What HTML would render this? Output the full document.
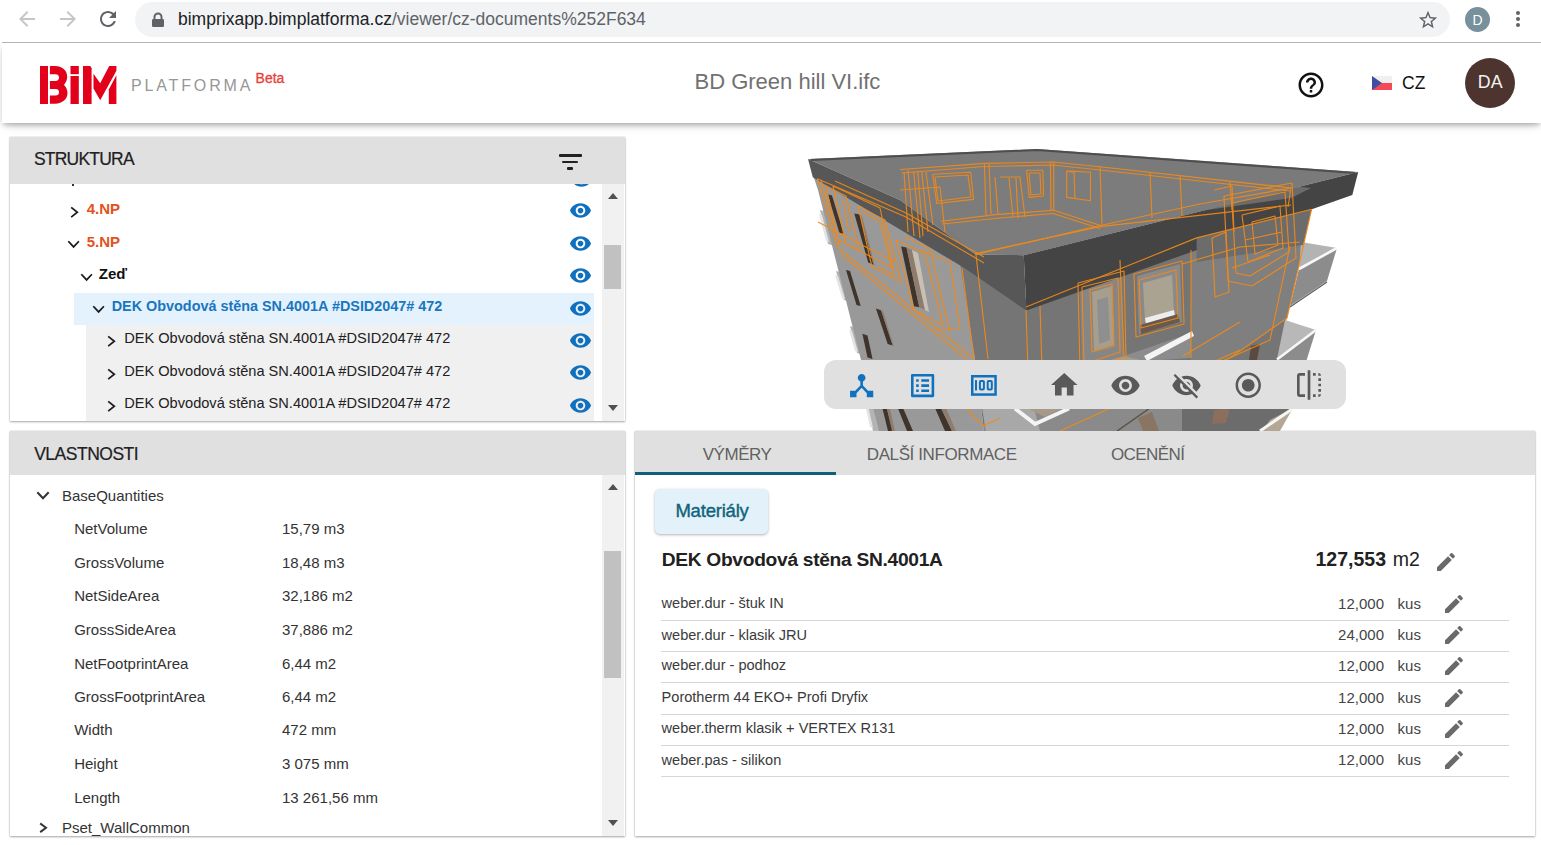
<!DOCTYPE html>
<html><head><meta charset="utf-8">
<style>
*{box-sizing:border-box;margin:0;padding:0}
html,body{width:1541px;height:845px;overflow:hidden;background:#fff;font-family:"Liberation Sans",sans-serif}
body{position:relative}
.t{position:absolute;line-height:1;white-space:nowrap}
.ic{position:absolute;display:block;overflow:visible}
.box{position:absolute}
</style></head><body>
<div class="box" style="left:2px;top:42px;width:1539px;height:1px;background:#b8b8b8"></div>
<div class="box" style="left:135px;top:2px;width:1315px;height:35px;border-radius:17.5px;background:#f1f3f4"></div>
<svg class="ic" style="left:15px;top:7px;width:24px;height:24px;" viewBox="0 0 24 24"><path fill="#c4c7c9" d="M20 11H7.83l5.59-5.59L12 4l-8 8 8 8 1.41-1.41L7.83 13H20v-2z"/></svg>
<svg class="ic" style="left:55.5px;top:7px;width:24px;height:24px;" viewBox="0 0 24 24"><path fill="#c4c7c9" d="M12 4l-1.41 1.41L16.17 11H4v2h12.17l-5.58 5.59L12 20l8-8z"/></svg>
<svg class="ic" style="left:95.5px;top:7.3px;width:24px;height:24px;" viewBox="0 0 24 24"><path fill="#5f6368" d="M17.65 6.35C16.2 4.9 14.21 4 12 4c-4.42 0-7.99 3.58-7.99 8s3.57 8 7.99 8c3.73 0 6.84-2.55 7.73-6h-2.08c-.82 2.33-3.04 4-5.65 4-3.31 0-6-2.69-6-6s2.69-6 6-6c1.66 0 3.14.69 4.22 1.78L13 11h7V4l-2.35 2.35z"/></svg>
<svg class="ic" style="left:150px;top:11px;width:16px;height:18px" viewBox="0 0 16 18"><path d="M4.5 8V6a3.5 3.5 0 0 1 7 0v2" fill="none" stroke="#5f6368" stroke-width="2"/><rect x="2" y="8" width="12" height="8" rx="1.2" fill="#5f6368"/></svg>
<div class="t" style="left:178px;top:11.19px;font-size:17.5px;color:#202124;font-weight:normal;">bimprixapp.bimplatforma.cz<span style="color:#5f6368">/viewer/cz-documents%252F634</span></div>
<svg class="ic" style="left:1416.5px;top:8.5px;width:22px;height:22px;" viewBox="0 0 24 24"><path fill="#5f6368" d="M22 9.24l-7.19-.62L12 2 9.19 8.63 2 9.24l5.46 4.73L5.82 21 12 17.270 18.18 21l-1.63-7.03L22 9.24zM12 15.4l-3.76 2.27 1-4.28-3.32-2.88 4.38-.38L12 6.1l1.71 4.04 4.38.38-3.32 2.88 1 4.28L12 15.4z"/></svg>
<div class="box" style="left:1465px;top:7px;width:25px;height:25px;border-radius:50%;background:#78909c"></div>
<div class="t" style="left:1472.5px;top:12.65px;font-size:14px;color:#fff;font-weight:normal;">D</div>
<div class="box" style="left:1515.6px;top:10.8px;width:4px;height:4px;border-radius:50%;background:#5f6368"></div>
<div class="box" style="left:1515.6px;top:17.2px;width:4px;height:4px;border-radius:50%;background:#5f6368"></div>
<div class="box" style="left:1515.6px;top:23.4px;width:4px;height:4px;border-radius:50%;background:#5f6368"></div>
<div class="box" style="left:2px;top:43px;width:1539px;height:80px;background:#fff;box-shadow:0 3px 5px -1px rgba(0,0,0,.26),0 6px 10px -4px rgba(0,0,0,.14);z-index:1"></div>
<div class="box" style="left:0;top:43px;width:1541px;height:80px;z-index:2"></div>
<svg class="ic" style="left:40px;top:66px;width:77px;height:38px;z-index:3" viewBox="0 0 77 38">
<g fill="#e2001a">
<rect x="0" y="0" width="8" height="38"/>
<path d="M9.9 0H15.1C22 0 27.2 4.5 27.2 10.6C27.2 14 25.8 16.8 24 18.9C26.3 21 27.5 24 27.5 27.1C27.5 33 22.5 37.8 15.1 37.8H9.9V29.5H15.4A3.6 3.25 0 0 0 15.4 23H9.9V15H15.4A3.6 3.4 0 0 0 15.4 8.2H9.9Z"/>
<rect x="30.5" y="0" width="8.3" height="8.2"/>
<rect x="30.5" y="10" width="8.3" height="28"/>
<path d="M43 0h7.3l1.3 2.2V38H43z"/>
<path d="M53.5 7.8L60.2 17.2 69.2 0H76.4V4.7L60.2 34.3 53.5 22.5z"/>
<path d="M76.4 9.2V38H68.8V23.5z"/>
</g></svg>
<div class="t" style="left:131px;top:77.86px;font-size:16px;color:#979797;font-weight:normal;letter-spacing:2.85px;z-index:3">PLATFORMA</div>
<div class="t" style="left:255.6px;top:71.15px;font-size:14px;color:#e8403a;font-weight:normal;z-index:3;-webkit-text-stroke:0.3px #e8403a">Beta</div>
<div class="t" style="left:694.5px;top:71.08px;font-size:22px;color:#717171;font-weight:normal;z-index:3">BD Green hill VI.ifc</div>
<svg class="ic" style="left:1295.5px;top:70px;width:30px;height:30px;z-index:3" viewBox="0 0 24 24"><path fill="#111" d="M11 18h2v-2h-2v2zm1-16C6.48 2 2 6.48 2 12s4.48 10 10 10 10-4.48 10-10S17.52 2 12 2zm0 18c-4.41 0-8-3.59-8-8s3.59-8 8-8 8 3.59 8 8-3.59 8-8 8zm0-14c-2.21 0-4 1.79-4 4h2c0-1.1.9-2 2-2s2 .9 2 2c0 2-3 1.75-3 5h2c0-2.250 3-2.5 3-5 0-2.21-1.79-4-4-4z"/></svg>
<svg class="ic" style="left:1372px;top:76px;width:20px;height:14px;z-index:3" viewBox="0 0 20 14"><rect width="20" height="7" fill="#f0f0f0"/><rect y="7" width="20" height="7" fill="#f44a58"/><path d="M0 0L10 7 0 14z" fill="#3f4ea0"/></svg>
<div class="t" style="left:1402px;top:75.39px;font-size:17.5px;color:#111;font-weight:normal;z-index:3">CZ</div>
<div class="box" style="left:1465px;top:58px;width:50px;height:50px;border-radius:50%;background:#4e342e;z-index:3"></div>
<div class="t" style="left:1477.8px;top:74.23px;font-size:17.8px;color:#f2f2f2;font-weight:normal;z-index:3">DA</div>
<div class="box" style="left:10px;top:137px;width:615px;height:284px;background:#fff;box-shadow:0 1px 2px rgba(0,0,0,.32),0 0 1px rgba(0,0,0,.25)"></div>
<div class="box" style="left:10px;top:137px;width:615px;height:47px;background:#e0e0e0"></div>
<div class="t" style="left:34px;top:150.79px;font-size:17.5px;color:#212121;font-weight:normal;letter-spacing:-0.8px;-webkit-text-stroke:0.2px #212121">STRUKTURA</div>
<div class="box" style="left:558.5px;top:154.2px;width:23px;height:2.6px;background:#212121;border-radius:1px"></div>
<div class="box" style="left:562.4px;top:160.6px;width:15.2px;height:2.6px;background:#212121;border-radius:1px"></div>
<div class="box" style="left:567.3px;top:167px;width:5.3px;height:2.6px;background:#212121;border-radius:1px"></div>
<div class="box" style="left:602px;top:184px;width:22px;height:237px;background:#f1f1f1"></div>
<div class="box" style="left:604px;top:245px;width:17px;height:44px;background:#c1c1c1"></div>
<svg class="ic" style="left:607.5px;top:192.5px;width:10px;height:6px" viewBox="0 0 10 6"><path d="M0 6L5 0 10 6z" fill="#505050"/></svg>
<svg class="ic" style="left:607.5px;top:405px;width:10px;height:6px" viewBox="0 0 10 6"><path d="M0 0L5 6 10 0z" fill="#505050"/></svg>
<div class="box" style="left:10px;top:184px;width:592px;height:237px;overflow:hidden">
<div class="box" style="left:64px;top:109px;width:520px;height:32px;background:#e3f2fd"></div>
<div class="box" style="left:76px;top:141px;width:508px;height:100px;background:#f0f0f0"></div>
</div>
<div class="box" style="left:560px;top:184px;width:40px;height:6px;overflow:hidden"><svg class="ic" style="left:9.5px;top:-16px;width:23px;height:23px" viewBox="0 0 24 24"><path fill="#1170be" d="M12 4.5C7 4.5 2.73 7.61 1 12c1.73 4.39 6 7.5 11 7.5s9.27-3.11 11-7.5c-1.73-4.39-6-7.5-11-7.5zM12 17c-2.76 0-5-2.24-5-5s2.24-5 5-5 5 2.24 5 5-2.24 5-5 5zm0-8c-1.66 0-3 1.34-3 3s1.34 3 3 3 3-1.34 3-3-1.34-3-3-3z"/></svg></div>
<div class="t" style="left:86.7px;top:201.40px;font-size:15px;color:#e4521d;font-weight:bold;">4.NP</div>
<svg class="ic" style="left:68.8px;top:205.3px;width:11.2px;height:14.5px" viewBox="-2 -2 11.2 14.5"><polyline points="0.85,0.85 6.35,5.25 0.85,9.65" fill="none" stroke="#1b1b1b" stroke-width="1.7" stroke-linecap="square" stroke-linejoin="miter"/></svg>
<svg class="ic" style="left:569px;top:199.3px;width:23px;height:23px;" viewBox="0 0 24 24"><path fill="#1170be" d="M12 4.5C7 4.5 2.73 7.61 1 12c1.73 4.39 6 7.5 11 7.5s9.27-3.11 11-7.5c-1.73-4.39-6-7.5-11-7.5zM12 17c-2.76 0-5-2.24-5-5s2.24-5 5-5 5 2.24 5 5-2.24 5-5 5zm0-8c-1.66 0-3 1.34-3 3s1.34 3 3 3 3-1.34 3-3-1.34-3-3-3z"/></svg>
<div class="t" style="left:86.7px;top:234.30px;font-size:15px;color:#e4521d;font-weight:bold;">5.NP</div>
<svg class="ic" style="left:66.4px;top:239px;width:15.2px;height:10.8px" viewBox="-2 -2 15.2 10.8"><polyline points="0.85,0.85 5.60,5.95 10.35,0.85" fill="none" stroke="#1b1b1b" stroke-width="1.7" stroke-linecap="square" stroke-linejoin="miter"/></svg>
<svg class="ic" style="left:569px;top:231.9px;width:23px;height:23px;" viewBox="0 0 24 24"><path fill="#1170be" d="M12 4.5C7 4.5 2.73 7.61 1 12c1.73 4.39 6 7.5 11 7.5s9.27-3.11 11-7.5c-1.73-4.39-6-7.5-11-7.5zM12 17c-2.76 0-5-2.24-5-5s2.24-5 5-5 5 2.24 5 5-2.24 5-5 5zm0-8c-1.66 0-3 1.34-3 3s1.34 3 3 3 3-1.34 3-3-1.34-3-3-3z"/></svg>
<div class="t" style="left:98.8px;top:266.30px;font-size:15px;color:#111;font-weight:bold;">Zeď</div>
<svg class="ic" style="left:79px;top:272px;width:15.2px;height:10.8px" viewBox="-2 -2 15.2 10.8"><polyline points="0.85,0.85 5.60,5.95 10.35,0.85" fill="none" stroke="#1b1b1b" stroke-width="1.7" stroke-linecap="square" stroke-linejoin="miter"/></svg>
<svg class="ic" style="left:569px;top:264.2px;width:23px;height:23px;" viewBox="0 0 24 24"><path fill="#1170be" d="M12 4.5C7 4.5 2.73 7.61 1 12c1.73 4.39 6 7.5 11 7.5s9.27-3.11 11-7.5c-1.73-4.39-6-7.5-11-7.5zM12 17c-2.76 0-5-2.24-5-5s2.24-5 5-5 5 2.24 5 5-2.24 5-5 5zm0-8c-1.66 0-3 1.34-3 3s1.34 3 3 3 3-1.34 3-3-1.34-3-3-3z"/></svg>
<div class="t" style="left:111.7px;top:298.81px;font-size:14.4px;color:#1a76c0;font-weight:bold;">DEK Obvodová stěna SN.4001A #DSID2047# 472</div>
<svg class="ic" style="left:91px;top:303.7px;width:15.2px;height:10.8px" viewBox="-2 -2 15.2 10.8"><polyline points="0.85,0.85 5.60,5.95 10.35,0.85" fill="none" stroke="#1b1b1b" stroke-width="1.7" stroke-linecap="square" stroke-linejoin="miter"/></svg>
<svg class="ic" style="left:569px;top:296.8px;width:23px;height:23px;" viewBox="0 0 24 24"><path fill="#1170be" d="M12 4.5C7 4.5 2.73 7.61 1 12c1.73 4.39 6 7.5 11 7.5s9.27-3.11 11-7.5c-1.73-4.39-6-7.5-11-7.5zM12 17c-2.76 0-5-2.24-5-5s2.24-5 5-5 5 2.24 5 5-2.24 5-5 5zm0-8c-1.66 0-3 1.34-3 3s1.34 3 3 3 3-1.34 3-3-1.34-3-3-3z"/></svg>
<div class="t" style="left:124.2px;top:331.44px;font-size:14.6px;color:#212121;font-weight:normal;">DEK Obvodová stěna SN.4001A #DSID2047# 472</div>
<svg class="ic" style="left:106px;top:334.3px;width:11.2px;height:14.5px" viewBox="-2 -2 11.2 14.5"><polyline points="0.85,0.85 6.35,5.25 0.85,9.65" fill="none" stroke="#1b1b1b" stroke-width="1.7" stroke-linecap="square" stroke-linejoin="miter"/></svg>
<svg class="ic" style="left:569px;top:328.9px;width:23px;height:23px;" viewBox="0 0 24 24"><path fill="#1170be" d="M12 4.5C7 4.5 2.73 7.61 1 12c1.73 4.39 6 7.5 11 7.5s9.27-3.11 11-7.5c-1.73-4.39-6-7.5-11-7.5zM12 17c-2.76 0-5-2.24-5-5s2.24-5 5-5 5 2.24 5 5-2.24 5-5 5zm0-8c-1.66 0-3 1.34-3 3s1.34 3 3 3 3-1.34 3-3-1.34-3-3-3z"/></svg>
<div class="t" style="left:124.2px;top:363.64px;font-size:14.6px;color:#212121;font-weight:normal;">DEK Obvodová stěna SN.4001A #DSID2047# 472</div>
<svg class="ic" style="left:106px;top:366.5px;width:11.2px;height:14.5px" viewBox="-2 -2 11.2 14.5"><polyline points="0.85,0.85 6.35,5.25 0.85,9.65" fill="none" stroke="#1b1b1b" stroke-width="1.7" stroke-linecap="square" stroke-linejoin="miter"/></svg>
<svg class="ic" style="left:569px;top:361.2px;width:23px;height:23px;" viewBox="0 0 24 24"><path fill="#1170be" d="M12 4.5C7 4.5 2.73 7.61 1 12c1.73 4.39 6 7.5 11 7.5s9.27-3.11 11-7.5c-1.73-4.39-6-7.5-11-7.5zM12 17c-2.76 0-5-2.24-5-5s2.24-5 5-5 5 2.24 5 5-2.24 5-5 5zm0-8c-1.66 0-3 1.34-3 3s1.34 3 3 3 3-1.34 3-3-1.34-3-3-3z"/></svg>
<div class="t" style="left:124.2px;top:395.94px;font-size:14.6px;color:#212121;font-weight:normal;">DEK Obvodová stěna SN.4001A #DSID2047# 472</div>
<svg class="ic" style="left:106px;top:398.8px;width:11.2px;height:14.5px" viewBox="-2 -2 11.2 14.5"><polyline points="0.85,0.85 6.35,5.25 0.85,9.65" fill="none" stroke="#1b1b1b" stroke-width="1.7" stroke-linecap="square" stroke-linejoin="miter"/></svg>
<svg class="ic" style="left:569px;top:393.7px;width:23px;height:23px;" viewBox="0 0 24 24"><path fill="#1170be" d="M12 4.5C7 4.5 2.73 7.61 1 12c1.73 4.39 6 7.5 11 7.5s9.27-3.11 11-7.5c-1.73-4.39-6-7.5-11-7.5zM12 17c-2.76 0-5-2.24-5-5s2.24-5 5-5 5 2.24 5 5-2.24 5-5 5zm0-8c-1.66 0-3 1.34-3 3s1.34 3 3 3 3-1.34 3-3-1.34-3-3-3z"/></svg>
<div class="box" style="left:71.5px;top:184px;width:2px;height:1.5px;background:#333"></div>
<div class="box" style="left:10px;top:431px;width:615px;height:405px;background:#fff;box-shadow:0 1px 2px rgba(0,0,0,.32),0 0 1px rgba(0,0,0,.25)"></div>
<div class="box" style="left:10px;top:431px;width:615px;height:44px;background:#e0e0e0"></div>
<div class="t" style="left:34.2px;top:446.19px;font-size:17.5px;color:#212121;font-weight:normal;letter-spacing:-0.5px;-webkit-text-stroke:0.2px #212121">VLASTNOSTI</div>
<div class="box" style="left:602px;top:475px;width:22px;height:361px;background:#f1f1f1"></div>
<div class="box" style="left:604px;top:551px;width:17px;height:127px;background:#c1c1c1"></div>
<svg class="ic" style="left:607.5px;top:484px;width:10px;height:6px" viewBox="0 0 10 6"><path d="M0 6L5 0 10 6z" fill="#505050"/></svg>
<svg class="ic" style="left:607.5px;top:820px;width:10px;height:6px" viewBox="0 0 10 6"><path d="M0 0L5 6 10 0z" fill="#505050"/></svg>
<svg class="ic" style="left:35.2px;top:490px;width:16px;height:11.3px" viewBox="-2 -2 16 11.3"><polyline points="1.00,1.00 6.00,6.30 11.00,1.00" fill="none" stroke="#333" stroke-width="2" stroke-linecap="square" stroke-linejoin="miter"/></svg>
<div class="t" style="left:62px;top:487.80px;font-size:15px;color:#333;font-weight:normal;">BaseQuantities</div>
<div class="t" style="left:74.2px;top:521.30px;font-size:15px;color:#333;font-weight:normal;">NetVolume</div>
<div class="t" style="left:282px;top:521.30px;font-size:15px;color:#333;font-weight:normal;">15,79 m3</div>
<div class="t" style="left:74.2px;top:554.60px;font-size:15px;color:#333;font-weight:normal;">GrossVolume</div>
<div class="t" style="left:282px;top:554.60px;font-size:15px;color:#333;font-weight:normal;">18,48 m3</div>
<div class="t" style="left:74.2px;top:588.30px;font-size:15px;color:#333;font-weight:normal;">NetSideArea</div>
<div class="t" style="left:282px;top:588.30px;font-size:15px;color:#333;font-weight:normal;">32,186 m2</div>
<div class="t" style="left:74.2px;top:621.70px;font-size:15px;color:#333;font-weight:normal;">GrossSideArea</div>
<div class="t" style="left:282px;top:621.70px;font-size:15px;color:#333;font-weight:normal;">37,886 m2</div>
<div class="t" style="left:74.2px;top:655.70px;font-size:15px;color:#333;font-weight:normal;">NetFootprintArea</div>
<div class="t" style="left:282px;top:655.70px;font-size:15px;color:#333;font-weight:normal;">6,44 m2</div>
<div class="t" style="left:74.2px;top:688.70px;font-size:15px;color:#333;font-weight:normal;">GrossFootprintArea</div>
<div class="t" style="left:282px;top:688.70px;font-size:15px;color:#333;font-weight:normal;">6,44 m2</div>
<div class="t" style="left:74.2px;top:722.30px;font-size:15px;color:#333;font-weight:normal;">Width</div>
<div class="t" style="left:282px;top:722.30px;font-size:15px;color:#333;font-weight:normal;">472 mm</div>
<div class="t" style="left:74.2px;top:755.70px;font-size:15px;color:#333;font-weight:normal;">Height</div>
<div class="t" style="left:282px;top:755.70px;font-size:15px;color:#333;font-weight:normal;">3 075 mm</div>
<div class="t" style="left:74.2px;top:789.60px;font-size:15px;color:#333;font-weight:normal;">Length</div>
<div class="t" style="left:282px;top:789.60px;font-size:15px;color:#333;font-weight:normal;">13 261,56 mm</div>
<svg class="ic" style="left:37.7px;top:820.5px;width:11px;height:13.5px" viewBox="-2 -2 11 13.5"><polyline points="1.00,1.00 6.00,4.75 1.00,8.50" fill="none" stroke="#333" stroke-width="2" stroke-linecap="square" stroke-linejoin="miter"/></svg>
<div class="t" style="left:62px;top:820.10px;font-size:15px;color:#333;font-weight:normal;">Pset_WallCommon</div>
<div class="box" style="left:635px;top:431px;width:900px;height:405px;background:#fff;box-shadow:0 1px 2px rgba(0,0,0,.32),0 0 1px rgba(0,0,0,.25)"></div>
<div class="box" style="left:635px;top:431px;width:900px;height:44px;background:#e0e0e0"></div>
<div class="box" style="left:635px;top:472px;width:201px;height:3px;background:#0f6078"></div>
<div class="t" style="left:702.7px;top:445.61px;font-size:17px;color:#616161;font-weight:normal;letter-spacing:-0.45px">VÝMĚRY</div>
<div class="t" style="left:866.8px;top:445.61px;font-size:17px;color:#616161;font-weight:normal;letter-spacing:-0.4px">DALŠÍ INFORMACE</div>
<div class="t" style="left:1110.9px;top:445.61px;font-size:17px;color:#616161;font-weight:normal;letter-spacing:-0.55px">OCENĚNÍ</div>
<div class="box" style="left:655px;top:489px;width:113px;height:45px;border-radius:5px;background:#e3f1fb;box-shadow:0 1px 3px rgba(0,0,0,.3)"></div>
<div class="t" style="left:675.4px;top:502.34px;font-size:18.5px;color:#0f6479;font-weight:normal;letter-spacing:-0.2px;-webkit-text-stroke:0.4px #0f6479">Materiály</div>
<div class="t" style="left:661.7px;top:549.75px;font-size:19.2px;color:#212121;font-weight:bold;letter-spacing:-0.3px">DEK Obvodová stěna SN.4001A</div>
<div class="t" style="right:155px;top:549.89px;font-size:19.5px;color:#212121;font-weight:bold;text-align:right;">127,553</div>
<div class="t" style="left:1392.7px;top:549.89px;font-size:19.5px;color:#212121;font-weight:normal;">m2</div>
<svg class="ic" style="left:1434px;top:549.5px;width:24px;height:24px;" viewBox="0 0 24 24"><path fill="#6a6a6a" d="M3 17.25V21h3.75L17.81 9.94l-3.75-3.75L3 17.25zM20.71 7.04c.39-.39.39-1.02 0-1.41l-2.34-2.34c-.39-.39-1.02-.39-1.41 0l-1.83 1.83 3.75 3.75 1.83-1.83z"/></svg>
<div class="t" style="left:661.6px;top:596.28px;font-size:14.55px;color:#3a3a3a;font-weight:normal;">weber.dur - štuk IN</div>
<div class="t" style="right:157px;top:595.90px;font-size:15px;color:#444;font-weight:normal;text-align:right;">12,000</div>
<div class="t" style="left:1397.6px;top:595.90px;font-size:15px;color:#444;font-weight:normal;">kus</div>
<svg class="ic" style="left:1441.5px;top:592.1px;width:24px;height:24px;" viewBox="0 0 24 24"><path fill="#6a6a6a" d="M3 17.25V21h3.75L17.81 9.94l-3.75-3.75L3 17.25zM20.71 7.04c.39-.39.39-1.02 0-1.41l-2.34-2.34c-.39-.39-1.02-.39-1.41 0l-1.83 1.83 3.75 3.75 1.83-1.83z"/></svg>
<div class="box" style="left:661px;top:620px;width:848px;height:1px;background:#d6d6d6"></div>
<div class="t" style="left:661.6px;top:627.58px;font-size:14.55px;color:#3a3a3a;font-weight:normal;">weber.dur - klasik JRU</div>
<div class="t" style="right:157px;top:627.20px;font-size:15px;color:#444;font-weight:normal;text-align:right;">24,000</div>
<div class="t" style="left:1397.6px;top:627.20px;font-size:15px;color:#444;font-weight:normal;">kus</div>
<svg class="ic" style="left:1441.5px;top:623.4px;width:24px;height:24px;" viewBox="0 0 24 24"><path fill="#6a6a6a" d="M3 17.25V21h3.75L17.81 9.94l-3.75-3.75L3 17.25zM20.71 7.04c.39-.39.39-1.02 0-1.41l-2.34-2.34c-.39-.39-1.02-.39-1.41 0l-1.83 1.83 3.75 3.75 1.83-1.83z"/></svg>
<div class="box" style="left:661px;top:651px;width:848px;height:1px;background:#d6d6d6"></div>
<div class="t" style="left:661.6px;top:658.48px;font-size:14.55px;color:#3a3a3a;font-weight:normal;">weber.dur - podhoz</div>
<div class="t" style="right:157px;top:658.10px;font-size:15px;color:#444;font-weight:normal;text-align:right;">12,000</div>
<div class="t" style="left:1397.6px;top:658.10px;font-size:15px;color:#444;font-weight:normal;">kus</div>
<svg class="ic" style="left:1441.5px;top:654.3px;width:24px;height:24px;" viewBox="0 0 24 24"><path fill="#6a6a6a" d="M3 17.25V21h3.75L17.81 9.94l-3.75-3.75L3 17.25zM20.71 7.04c.39-.39.39-1.02 0-1.41l-2.34-2.34c-.39-.39-1.02-.39-1.41 0l-1.83 1.83 3.75 3.75 1.83-1.83z"/></svg>
<div class="box" style="left:661px;top:682px;width:848px;height:1px;background:#d6d6d6"></div>
<div class="t" style="left:661.6px;top:689.88px;font-size:14.55px;color:#3a3a3a;font-weight:normal;">Porotherm 44 EKO+ Profi Dryfix</div>
<div class="t" style="right:157px;top:689.50px;font-size:15px;color:#444;font-weight:normal;text-align:right;">12,000</div>
<div class="t" style="left:1397.6px;top:689.50px;font-size:15px;color:#444;font-weight:normal;">kus</div>
<svg class="ic" style="left:1441.5px;top:685.7px;width:24px;height:24px;" viewBox="0 0 24 24"><path fill="#6a6a6a" d="M3 17.25V21h3.75L17.81 9.94l-3.75-3.75L3 17.25zM20.71 7.04c.39-.39.39-1.02 0-1.41l-2.34-2.34c-.39-.39-1.02-.39-1.41 0l-1.83 1.83 3.75 3.75 1.83-1.83z"/></svg>
<div class="box" style="left:661px;top:714px;width:848px;height:1px;background:#d6d6d6"></div>
<div class="t" style="left:661.6px;top:721.28px;font-size:14.55px;color:#3a3a3a;font-weight:normal;">weber.therm klasik + VERTEX R131</div>
<div class="t" style="right:157px;top:720.90px;font-size:15px;color:#444;font-weight:normal;text-align:right;">12,000</div>
<div class="t" style="left:1397.6px;top:720.90px;font-size:15px;color:#444;font-weight:normal;">kus</div>
<svg class="ic" style="left:1441.5px;top:717.1px;width:24px;height:24px;" viewBox="0 0 24 24"><path fill="#6a6a6a" d="M3 17.25V21h3.75L17.81 9.94l-3.75-3.75L3 17.25zM20.71 7.04c.39-.39.39-1.02 0-1.41l-2.34-2.34c-.39-.39-1.02-.39-1.41 0l-1.83 1.83 3.75 3.75 1.83-1.83z"/></svg>
<div class="box" style="left:661px;top:745px;width:848px;height:1px;background:#d6d6d6"></div>
<div class="t" style="left:661.6px;top:752.58px;font-size:14.55px;color:#3a3a3a;font-weight:normal;">weber.pas - silikon</div>
<div class="t" style="right:157px;top:752.20px;font-size:15px;color:#444;font-weight:normal;text-align:right;">12,000</div>
<div class="t" style="left:1397.6px;top:752.20px;font-size:15px;color:#444;font-weight:normal;">kus</div>
<svg class="ic" style="left:1441.5px;top:748.4px;width:24px;height:24px;" viewBox="0 0 24 24"><path fill="#6a6a6a" d="M3 17.25V21h3.75L17.81 9.94l-3.75-3.75L3 17.25zM20.71 7.04c.39-.39.39-1.02 0-1.41l-2.34-2.34c-.39-.39-1.02-.39-1.41 0l-1.83 1.83 3.75 3.75 1.83-1.83z"/></svg>
<div class="box" style="left:661px;top:776px;width:848px;height:1px;background:#d6d6d6"></div>
<svg class="ic" style="left:0;top:0;width:1541px;height:845px" viewBox="0 0 1541 845">
<defs><clipPath id="vc"><rect x="635" y="130" width="900" height="301"/></clipPath></defs>
<g clip-path="url(#vc)">
<!-- left balcony stubs -->
<g fill="#b4b4b4">
<polygon points="820,210 827,212 835,246 828,244"/>
<polygon points="836,271 843,273 851,302 844,300"/>
<polygon points="850,326 857,328 864,355 857,353"/>
<polygon points="865,396 872,398 880,431 873,431"/>
</g>
<g fill="#e4e4e4">
<polygon points="819,214 822,215 829,242 826,241"/>
<polygon points="835,275 838,276 845,299 842,298"/>
<polygon points="849,330 852,331 858,352 855,351"/>
<polygon points="864,400 867,401 873,428 870,427"/>
</g>
<!-- lower building left face -->
<polygon points="812,172 966,262 975,359 984,431 879,431 818,190" fill="#999999"/>
<!-- right face -->
<polygon points="960,262 1026,300 1311.6,206 1311.6,209.2 1295.7,280 1287,316 1279,360 1262,431 984,431 975,359" fill="#757575"/>
<!-- lighter column on right part of top floor -->
<polygon points="1191,250 1311.6,209.2 1295.7,280 1287,318 1230,358 1191,370" fill="#7f7f7f"/>
<!-- lower right part -->
<polygon points="1182,408 1290,408 1278,431 1182,431" fill="#6c6c6c"/>
<polygon points="984,408 1182,408 1182,431 984,431" fill="#8a8a8a"/>
<polygon points="982,408 1034,408 1040,431 986,431" fill="#a8a8a8"/>
<!-- windows on left face (dark slits) -->
<g fill="#3f342c">
<polygon points="827.7,194.3 832,195.4 843.7,233.8 839.4,232.7"/>
<polygon points="854.3,213.5 859.7,214.6 873.5,264.7 868.2,262.5"/>
<polygon points="901.2,246.5 906.5,247.6 919.3,307.3 914,306.2"/>
<polygon points="846,270 850,271 860.7,306 856.5,305"/>
<polygon points="875.9,308.5 881,310.2 892.7,345.6 887.7,343.9"/>
<polygon points="862.4,333.8 867.5,335.5 872.5,359 867.5,357.4"/>
<polygon points="882.6,409 887,409 892.7,431 888,431"/>
<polygon points="897.8,408 903,408 913,431 907,431"/>
<polygon points="935,408 941,408 952,431 945,431"/>
</g>
<g fill="#8e7d6e">
<polygon points="906.5,247.6 912,250 925,310 919.3,307.3"/>
<polygon points="859.7,214.6 862,216 875,266 873.5,264.7"/>
<polygon points="881,310.2 883,311 894,347 892.7,345.6"/>
<polygon points="887,409 890,409 895,431 892,431"/>
<polygon points="941,408 946,408 956,431 952,431"/>
</g>
<polygon points="912,250 918,253 929,312 925,310" fill="#c8c0b2"/>
<!-- right face features: door and window openings -->
<polygon points="1080,285 1122,274 1124,356 1082,368" fill="#868686"/>
<polygon points="1092,292 1112,286 1114,345 1094,351" fill="#a79e8e"/>
<polygon points="1097,300 1108,297 1110,340 1099,344" fill="#8f8f8f"/>
<polygon points="1137,276 1180,264 1182,322 1139,334" fill="#8a8a8a"/>
<polygon points="1143,283 1172,275 1174,314 1145,322" fill="#aba392"/>
<polygon points="1145,318 1174,310 1175,316 1146,324" fill="#ededed"/>
<polygon points="1140,325 1178,314 1180,322 1141,334" fill="#6a5a4e"/>
<!-- terrace floor / white stripe -->
<polygon points="1124,356 1191,333 1191,358 1146,361" fill="#8c8c8c"/>
<polygon points="1144,356 1192,331 1194,336 1147,361" fill="#f4f4f4"/>
<polygon points="1082,368 1124,356 1146,361 1110,366" fill="#a59c8b"/>
<!-- bottom area below toolbar -->
<polygon points="1027,408 1063,408 1045,417" fill="#a59a88"/>
<polyline points="1015,408.5 1035,424 1069,408.5" stroke="#f4f4f4" stroke-width="4" fill="none"/>
<polyline points="1117,431 1150,408" stroke="#5a5246" stroke-width="1.5" fill="none"/>
<polygon points="1138,418 1152,412 1159,431 1143,431" fill="#8a7563"/>
<polygon points="1214,410 1230,408 1226,423 1212,424" fill="#8c6e5c"/>
<polygon points="1270,420 1293,408 1280,431 1262,431" fill="#b4a894"/>
<polyline points="1260,431 1293,408.4" stroke="#f6f6f6" stroke-width="3" fill="none"/>
<!-- right balconies -->
<polygon points="1301,242 1337,248 1299,269" fill="#b3b3b3"/>
<polygon points="1337,248 1327,281 1290,306 1299,269" fill="#8c8c8c"/>
<polyline points="1299,269 1337,248" stroke="#f7f7f7" stroke-width="2.6" fill="none"/>
<polyline points="1327,282 1290,307" stroke="#5c5c5c" stroke-width="1.2" fill="none"/>
<polygon points="1285,320 1316,330 1277,359" fill="#b8b8b8"/>
<polygon points="1316,330 1306,362 1272,390 1277,359" fill="#8c8c8c"/>
<polyline points="1277,359.5 1316,330" stroke="#f7f7f7" stroke-width="2.6" fill="none"/>
<polygon points="1251,346 1260,344 1257,360 1249,360" fill="#5a4a40"/>
<!-- roof slab -->
<polygon points="808,159 1037,149 1358,172 1023.75,255.2 975.6,254.5 900,200" fill="#7a7a7a"/>
<polygon points="808,159 900,200 975.6,254.5 1023.75,255.2 1026.4,310.5 964,267.8 812.8,177.3" fill="#575757"/>
<polygon points="1023.75,255.2 1358.2,172.1 1352.3,194.9 1026.4,310.5" fill="#444444"/>
<polyline points="811,160 1037,150 1355,173" stroke="#4e4e4e" stroke-width="2" fill="none"/>
<!-- top floor right wall showing over slab face -->
<polygon points="1196.6,237.9 1311.6,209.2 1303,245 1196.6,262" fill="#6c6c6c"/>
<!-- interior: top floor walls seen through roof -->
<polygon points="900,169.5 984.4,163.4 1053.7,162 1100,166.8 1311,188 1291,198 1100,225.3 1053.7,210.3 998,214.4 940.8,221.2 900,199.4" fill="#7e7e7e" opacity=".7"/>
<polygon points="940.8,221.2 998,214.4 1053.7,210.3 1100,225.3 1240,197 1291,188.5 1100,235.5 1023.75,255 974.8,253.8 960,240" fill="#7c7c7c"/>
<!-- orange wireframe -->
<g stroke="#f28a18" stroke-width="1.15" fill="none" opacity=".92" stroke-linejoin="round">
<polyline points="975.6,254.5 1090,227.8 1200,204 1291,188 1288,207"/>
<polyline points="1026,307 1196.6,237.9 1311.6,209.2"/>
<polyline points="962,268 974,359"/>
<polyline points="976,255 988,359"/>
<polyline points="1311.6,209.2 1295.7,280 1287,318 1230,358 1150,390 1060,431"/>
<polyline points="1290,246 1270,340 1180,380"/>
<polyline points="966,408 983,426 1000,418"/>
<polyline points="817.4,178.7 837.3,247"/>
<polyline points="821,180 840,246"/>
<polyline points="837.3,247 974,359"/>
<polyline points="841,254 966,359"/>
<polyline points="817.4,178.7 906,217 984,263"/>
<polyline points="835,181 906,213 984,257"/>
<polyline points="826,186 846,196 859,250 838,240 826,186"/>
<polyline points="833,186 880,208 893,268 846,244 833,186"/>
<polyline points="858,206 885,220 901,282 872,267 858,206"/>
<polyline points="863,212 880,222 894,275 877,266"/>
<polyline points="896,240 925,254 943,325 914,310 896,240"/>
<polyline points="920,250 950,262 960,328 935,330"/>
<polyline points="904,236 930,249 950,332"/>
<polyline points="843,200 849,232"/>
<polyline points="818,222 860,244 895,262"/>
<!-- interior back walls -->
<polyline points="900,169.5 984.4,163.4 1053.7,162 1100,166.8 1291,188"/>
<polyline points="902,173 984,166.5 1053,165 1100,170 1290,191"/>
<polyline points="940.8,221.2 998,214.4 1053.7,210.3 1100,225.3"/>
<polyline points="942,224 1000,218 1053,213.5 1100,228.5"/>
<polyline points="932.7,174.3 970.7,172.2 973.5,199.4 936.7,203.5 932.7,174.3"/>
<polyline points="935,177 968,175 971,197 938,201 935,177"/>
<polyline points="1026.5,170.2 1042.9,170.2 1043.5,196 1029.3,197.4 1026.5,170.2"/>
<polyline points="1029,173 1040,173 1041,194 1031,195 1029,173"/>
<polyline points="1066.7,170.9 1090.5,172.2 1090.5,200.8 1066.7,197.4 1066.7,170.9"/>
<polyline points="1070,172 1074,172 1075,199"/>
<polyline points="1053.7,162 1053.7,210.3"/>
<polyline points="1050.5,163 1051,211"/>
<polyline points="984.4,163.4 986,215"/>
<polyline points="989,163 991,214"/>
<polyline points="995,177 998,214"/>
<polyline points="1000,177 1020,177 1025,217"/>
<polyline points="1009,178 1013,217"/>
<polyline points="1016,178 1018,218"/>
<polyline points="974.8,253.8 1100,226.6 1291,205"/>
<polyline points="904,172 908,232"/>
<polyline points="908,170 914,236"/>
<polyline points="913.6,171 920,238"/>
<polyline points="917.7,171 923,236"/>
<polyline points="921.8,172 928,232"/>
<polyline points="925.9,172 933,225"/>
<polyline points="900,190 940,187 945,232"/>
<polyline points="1100,167 1102,225"/>
<polyline points="1150,172 1152,218"/>
<polyline points="1180,176 1182,216"/>
<polyline points="1230,182 1232,210"/>
<!-- windows/doors outlines on right -->
<polyline points="1078,283 1124,271 1126,357 1080,370 1078,283"/>
<polyline points="1082,287 1118,278 1120,352 1084,364 1082,287"/>
<polyline points="1090,290 1112,284 1114,346 1092,352 1090,290"/>
<polyline points="1134,274 1182,261 1184,324 1136,337 1134,274"/>
<polyline points="1139,280 1176,270 1178,318 1141,328 1139,280"/>
<polyline points="1120,260 1124,356"/>
<polyline points="1224,196 1292,183 1296,258 1252,286 1228,281 1224,196"/>
<polyline points="1232,203 1285,192 1289,252 1250,276 1236,273 1232,203"/>
<polyline points="1242,215 1280,206 1283,248 1248,262 1242,215"/>
<polyline points="1252,222 1275,216 1278,245 1255,254 1252,222"/>
<polyline points="1212,238 1226,232 1229,292 1215,297 1212,238"/>
<polyline points="1214,190 1232,186 1234,232"/>
<polyline points="1245,240 1282,232"/>
<polyline points="1232,268 1270,255"/>
<polyline points="1026,310 1029,400"/>
<polyline points="1040,306 1043,400"/>
<polyline points="1183,356 1240,322"/>
<polyline points="1182,264 1240,247 1300,242"/>
<polyline points="1191,250 1191,358"/>
<polyline points="1150,390 1240,350"/>
</g>
</g>
</svg>
<div class="box" style="left:824px;top:360px;width:522px;height:49px;border-radius:12px;background:#e0e0e0"></div>
<svg class="ic" style="left:849.8px;top:373.8px;width:32px;height:32px;width:23.3px;height:23.2px;" viewBox="3 3 18 18"><path fill="#0e72bf" d="M17 16l-4-4V8.82C14.16 8.4 15 7.3 15 6c0-1.66-1.34-3-3-3S9 4.34 9 6c0 1.3.84 2.4 2 2.82V12l-4 4H3v5h5v-3.05l4-4.2 4 4.2V21h5v-5h-4z"/></svg>
<svg class="ic" style="left:910.8px;top:373.8px;width:24px;height:24px;width:23.2px;height:23.2px;" viewBox="3 3 18 18"><path fill="#0e72bf" d="M19 5v14H5V5h14m1.1-2H3.9c-.5 0-.9.4-.9.9v16.2c0 .4.4.9.9.9h16.2c.4 0 .9-.5.9-.9V3.9c0-.5-.5-.9-.9-.9zM11 7h6v2h-6V7zm0 4h6v2h-6v-2zm0 4h6v2h-6zM7 7h2v2H7zm0 4h2v2H7zm0 4h2v2H7z"/></svg>
<svg class="ic" style="left:971px;top:375px;width:26px;height:21px" viewBox="0 0 26 21"><rect x="1.25" y="1.25" width="23.3" height="18.3" fill="none" stroke="#0f70bd" stroke-width="2.5"/>
<rect x="4" y="5" width="2" height="10.5" rx=".6" fill="#0f70bd"/><rect x="8.9" y="6" width="4" height="8.5" rx="1" fill="none" stroke="#0f70bd" stroke-width="2"/><rect x="16.7" y="6" width="4.1" height="8.5" rx="1" fill="none" stroke="#0f70bd" stroke-width="2"/></svg>
<svg class="ic" style="left:1050.5px;top:373.3px;width:32px;height:32px;width:26.5px;height:22.5px;" viewBox="2 3 20 17"><path fill="#595959" d="M10 20v-6h4v6h5v-8h3L12 3 2 12h3v8z"/></svg>
<svg class="ic" style="left:1109.5px;top:369.5px;width:31px;height:31px;" viewBox="0 0 24 24"><path fill="#595959" d="M12 4.5C7 4.5 2.73 7.61 1 12c1.73 4.39 6 7.5 11 7.5s9.27-3.11 11-7.5c-1.73-4.39-6-7.5-11-7.5zM12 17c-2.76 0-5-2.24-5-5s2.24-5 5-5 5 2.24 5 5-2.24 5-5 5zm0-8c-1.66 0-3 1.34-3 3s1.34 3 3 3 3-1.34 3-3-1.34-3-3-3z"/></svg>
<svg class="ic" style="left:1170.5px;top:369.5px;width:31px;height:31px;" viewBox="0 0 24 24"><path fill="#595959" d="M12 7c2.76 0 5 2.24 5 5 0 .65-.13 1.26-.36 1.83l2.92 2.92c1.51-1.26 2.7-2.89 3.43-4.75-1.730-4.39-6-7.5-11-7.5-1.4 0-2.74.25-3.98.7l2.16 2.16C10.740 7.13 11.350 7 12 7zM2 4.27l2.28 2.28.46.46C3.08 8.3 1.78 10.02 1 12c1.73 4.39 6 7.5 11 7.5 1.55 0 3.03-.3 4.38-.84l.42.42L19.73 22 21 20.73 3.27 3 2 4.270zM7.53 9.8l1.55 1.55c-.05.21-.08.43-.08.65 0 1.66 1.34 3 3 3 .22 0 .44-.03.65-.08l1.55 1.55c-.67.33-1.41.53-2.2.53-2.76 0-5-2.24-5-5 0-.79.2-1.53.53-2.2zm4.31-.78l3.15 3.15.02-.16c0-1.66-1.34-3-3-3l-.17.01z"/></svg>
<svg class="ic" style="left:1232.5px;top:370px;width:30.5px;height:30.5px;" viewBox="0 0 24 24"><path fill="#595959" d="M12 7c-2.76 0-5 2.24-5 5s2.24 5 5 5 5-2.24 5-5-2.24-5-5-5zm0-5C6.48 2 2 6.48 2 12s4.48 10 10 10 10-4.48 10-10S17.52 2 12 2zm0 18c-4.42 0-8-3.58-8-8s3.58-8 8-8 8 3.58 8 8-3.58 8-8 8z"/></svg>
<svg class="ic" style="left:1293px;top:369px;width:32px;height:32px;" viewBox="0 0 24 24"><path fill="#595959" d="M15 21h2v-2h-2v2zm4-12h2V7h-2v2zM3 5v14c0 1.1.9 2 2 2h4v-2H5V5h4V3H5c-1.1 0-2 .9-2 2zm16-2v2h2c0-1.1-.9-2-2-2zm-8 20h2V1h-2v22zm8-6h2v-2h-2v2zM15 5h2V3h-2v2zm4 8h2v-2h-2v2zm0 8c1.1 0 2-.9 2-2h-2v2z"/></svg>
</body></html>
